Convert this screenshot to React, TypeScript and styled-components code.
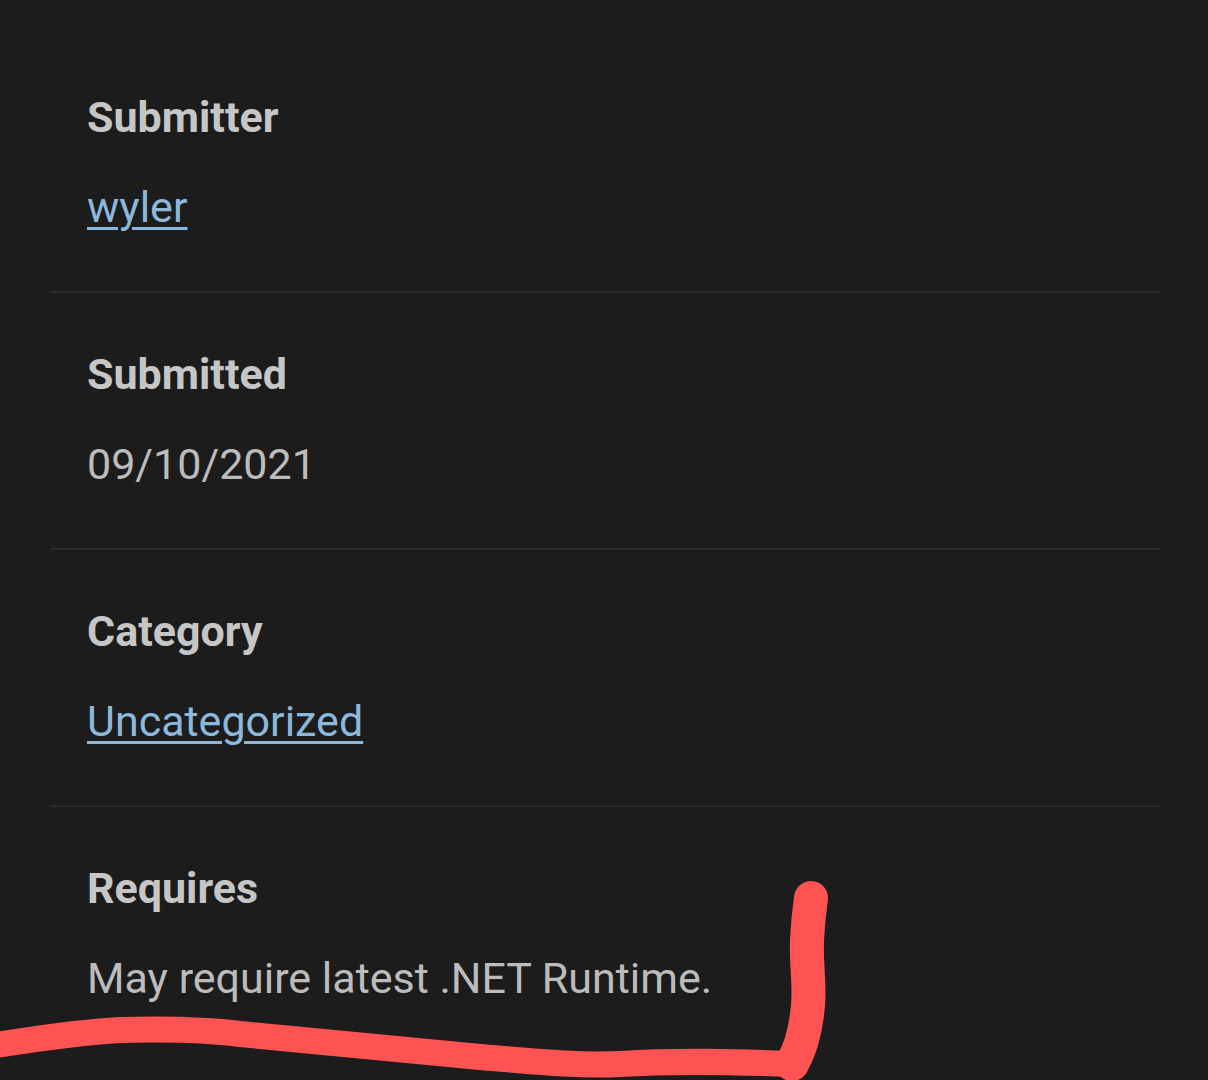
import React, { FC, ReactElement } from "react";
import styled, { createGlobalStyle } from "styled-components";

type Detail = {
  label: string;
  value: string;
  link?: boolean;
};

const details: Detail[] = [
  { label: "Submitter", value: "wyler", link: true },
  { label: "Submitted", value: "09/10/2021" },
  { label: "Category", value: "Uncategorized", link: true },
  { label: "Requires", value: "May require latest .NET Runtime." },
];

const App: FC = (): ReactElement => {
  return (
    <Page>
      <GlobalStyle />
      <List>
        {details.map((d) => (
          <Section key={d.label}>
            <Label>{d.label}</Label>
            {d.link ? <LinkValue href="#">{d.value}</LinkValue> : <Value>{d.value}</Value>}
          </Section>
        ))}
      </List>
      <Scribble viewBox="0 0 1208 1080" aria-hidden>
        <path
          d="M -10 1046 C 40 1038 80 1032 120 1030 C 160 1029 200 1029 240 1034 C 320 1042 400 1050 480 1057 C 540 1062 580 1066 620 1064 C 680 1060 740 1062 792 1064"
          fill="none"
          stroke="#ff5252"
          strokeWidth={26}
          strokeLinecap="round"
          strokeLinejoin="round"
        />
        <path
          d="M 792 1064 C 800 1050 806 1030 808 1005 C 810 985 806 965 807 940 C 808 920 810 905 811 898"
          fill="none"
          stroke="#ff5252"
          strokeWidth={34}
          strokeLinecap="round"
          strokeLinejoin="round"
        />
      </Scribble>
    </Page>
  );
};

export default App;

const GlobalStyle = createGlobalStyle`
  html, body {
    margin: 0;
    padding: 0;
    background-color: #1c1c1c;
  }
  body {
    font-family: Roboto, "Noto Sans", sans-serif;
    overflow: hidden;
  }
`;

const Page = styled.main`
  position: relative;
  width: 1208px;
  height: 1080px;
  background-color: #1c1c1c;
  overflow: hidden;
`;

const List = styled.div`
  display: flex;
  flex-direction: column;
  padding: 36px 48px 0 50px;
`;

const Section = styled.section`
  display: flex;
  flex-direction: column;
  align-items: flex-start;
  gap: 42px;
  padding: 57px 0 60px 37px;
  border-bottom: 2px solid #2a2a2a;

  &:last-child {
    border-bottom: 0;
  }
`;

const Label = styled.h2`
  margin: 0;
  font-family: Roboto, sans-serif;
  font-weight: 700;
  font-size: 43px;
  line-height: 48px;
  color: #c6c6c6;
`;

const Value = styled.p`
  margin: 0;
  font-family: Roboto, sans-serif;
  font-weight: 400;
  font-size: 43px;
  line-height: 48px;
  color: #bcbcbc;
`;

const LinkValue = styled.a`
  font-family: Roboto, sans-serif;
  font-weight: 400;
  font-size: 43px;
  line-height: 48px;
  color: #8cb8dc;
  text-decoration: underline;
  text-decoration-thickness: 3px;
  text-underline-offset: 5px;
`;

const Scribble = styled.svg`
  position: absolute;
  inset: 0;
  width: 1208px;
  height: 1080px;
  pointer-events: none;
`;
